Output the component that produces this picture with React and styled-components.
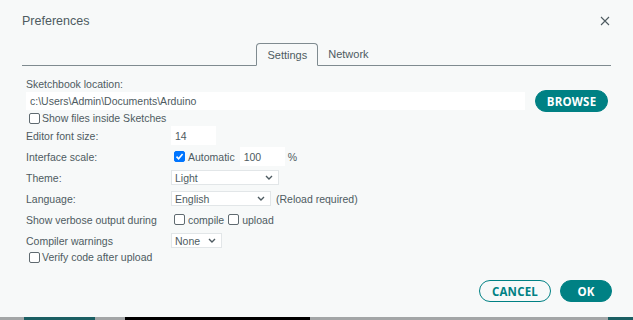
import React from "react";
import styled, { createGlobalStyle } from "styled-components";

const Global = createGlobalStyle`
  html, body { margin: 0; padding: 0; background: #f7f9f9; }
  body { font-family: "Liberation Sans", Arial, sans-serif; }
  * { box-sizing: border-box; }
`;

const Page = styled.div`
  width: 633px;
  height: 320px;
  display: flex;
  flex-direction: column;
  overflow: hidden;
`;

const Dialog = styled.div`
  height: 317px;
  background: #f7f9f9;
  padding: 0 22px;
  display: flex;
  flex-direction: column;
  color: #4e5b61;
  font-size: 10.5px;
`;

const Header = styled.div`
  height: 41px;
  display: flex;
  align-items: center;
  justify-content: space-between;
  padding-top: 1px;
`;

const Title = styled.div`
  font-size: 12.5px;
  color: #4e5b61;
`;

const Close = styled.div`
  width: 12px;
  height: 12px;
  display: flex;
`;

const Tabs = styled.div`
  display: flex;
  justify-content: center;
  align-items: flex-end;
  height: 24px;
  border-bottom: 1px solid #7f8b90;
  margin-top: 1px;
  padding-left: 2px;
`;

const Tab = styled.div`
  height: 22px;
  padding: 0 ${(p) => (p.$active ? 10 : 9)}px;
  display: flex;
  align-items: center;
  font-size: 11px;
  color: #4e5b61;
  ${(p) =>
    p.$active
      ? `border: 1px solid #7f8b90; border-bottom: 1px solid #f7f9f9; border-radius: 4px 4px 0 0; margin-bottom: -1px; height: 23px;`
      : `border: 1px solid transparent;`}
`;

const Body = styled.div`
  padding: 12px 0 0 4px;
  display: flex;
  flex-direction: column;
`;

const Label = styled.div`
  font-size: 10.5px;
  color: #4e5b61;
  white-space: nowrap;
`;

const LocationRow = styled.div`
  display: flex;
  align-items: center;
  height: 22px;
`;

const PathInput = styled.div`
  width: 499px;
  height: 18px;
  background: #fff;
  padding-left: 4px;
  display: flex;
  align-items: center;
  font-size: 10.5px;
  color: #4e5b61;
  margin-top: -1px;
`;

const Button = styled.div`
  height: 22px;
  border-radius: 11px;
  display: flex;
  align-items: center;
  justify-content: center;
  font-family: "Open Sans", sans-serif;
  font-weight: 700;
  font-size: 11.5px;
  letter-spacing: 0.2px;
  width: ${(p) => p.$w}px;
  background: ${(p) => (p.$outline ? "transparent" : "#008184")};
  color: ${(p) => (p.$outline ? "#008184" : "#ffffff")};
  border: 1px solid #008184;
`;

const BrowseWrap = styled.div`
  margin-left: 10px;
`;

const CheckRow = styled.label`
  display: flex;
  align-items: center;
  height: 12px;
  padding-left: 3px;
  gap: 2px;
`;

const Box = styled.span`
  width: 11px;
  height: 11px;
  border-radius: 2px;
  border: 1px solid #5f6a70;
  background: #fff;
  display: inline-flex;
  align-items: center;
  justify-content: center;
  flex: none;
  ${(p) => p.$checked && `background: #0075ff; border-color: #0075ff;`}
`;

const Grid = styled.div`
  display: grid;
  grid-template-columns: 145px auto;
  grid-auto-rows: 21px;
  align-items: center;
  margin-top: 1px;
`;

const Controls = styled.div`
  display: flex;
  align-items: center;
  gap: ${(p) => p.$gap || 0}px;
`;

const SmallInput = styled.div`
  width: ${(p) => p.$w}px;
  height: 19px;
  background: #fff;
  display: flex;
  align-items: center;
  padding-left: 4px;
  font-size: 10.5px;
  color: #4e5b61;
  margin-left: ${(p) => p.$ml || 0}px;
`;

const Select = styled.div`
  width: ${(p) => p.$w}px;
  height: 15px;
  background: #fff;
  border: 1px solid #e2e6e8;
  display: flex;
  align-items: center;
  justify-content: space-between;
  padding: 0 5px 0 3px;
  font-size: 10.5px;
  color: #4e5b61;
`;

const Inline = styled.span`
  display: inline-flex;
  align-items: center;
  gap: 3px;
  margin-left: ${(p) => p.$ml || 0}px;
`;

const Suffix = styled(Label)`
  margin-left: 3px;
`;

const Footer = styled.div`
  margin-top: auto;
  height: 37px;
  padding-bottom: 15px;
  display: flex;
  justify-content: flex-end;
  align-items: flex-start;
  gap: 9px;
  margin-right: -1px;
`;

const Strip = styled.div`
  height: 3px;
  display: flex;
`;

const Seg = styled.div`
  width: ${(p) => p.$w}px;
  background: ${(p) => p.$c};
`;

const Chevron = () => (
  <svg width="8" height="5" viewBox="0 0 8 5">
    <polyline points="1,1 4,4 7,1" fill="none" stroke="#4e5b61" strokeWidth="1.4" />
  </svg>
);

const Check = ({ checked }) => (
  <Box $checked={checked}>
    {checked && (
      <svg width="9" height="9" viewBox="0 0 9 9">
        <polyline points="1.5,4.6 3.6,6.8 7.6,2" fill="none" stroke="#fff" strokeWidth="1.6" />
      </svg>
    )}
  </Box>
);

export default function App() {
  return (
    <>
      <Global />
      <Page>
        <Dialog>
          <Header>
            <Title>Preferences</Title>
            <Close>
              <svg width="12" height="12" viewBox="0 0 12 12">
                <path d="M2 2 L10 10 M10 2 L2 10" stroke="#4e5b61" strokeWidth="1.1" />
              </svg>
            </Close>
          </Header>
          <Tabs>
            <Tab $active>Settings</Tab>
            <Tab>Network</Tab>
          </Tabs>
          <Body>
            <Label>Sketchbook location:</Label>
            <LocationRow>
              <PathInput>c:\Users\Admin\Documents\Arduino</PathInput>
              <BrowseWrap>
                <Button $w={73}>BROWSE</Button>
              </BrowseWrap>
            </LocationRow>
            <CheckRow>
              <Check />
              <Label>Show files inside Sketches</Label>
            </CheckRow>
            <Grid>
              <Label>Editor font size:</Label>
              <Controls>
                <SmallInput $w={45}>14</SmallInput>
              </Controls>
              <Label>Interface scale:</Label>
              <Controls>
                <Inline $ml={3}>
                  <Check checked />
                  <Label>Automatic</Label>
                </Inline>
                <SmallInput $w={45} $ml={5}>100</SmallInput>
                <Suffix>%</Suffix>
              </Controls>
              <Label>Theme:</Label>
              <Controls>
                <Select $w={108}>
                  <span>Light</span>
                  <Chevron />
                </Select>
              </Controls>
              <Label>Language:</Label>
              <Controls $gap={5}>
                <Select $w={100}>
                  <span>English</span>
                  <Chevron />
                </Select>
                <Label>(Reload required)</Label>
              </Controls>
              <Label>Show verbose output during</Label>
              <Controls>
                <Inline $ml={3}>
                  <Check />
                  <Label>compile</Label>
                </Inline>
                <Inline $ml={4}>
                  <Check />
                  <Label>upload</Label>
                </Inline>
              </Controls>
              <Label>Compiler warnings</Label>
              <Controls>
                <Select $w={51}>
                  <span>None</span>
                  <Chevron />
                </Select>
              </Controls>
            </Grid>
            <CheckRow>
              <Check />
              <Label>Verify code after upload</Label>
            </CheckRow>
          </Body>
          <Footer>
            <Button $outline $w={72}>CANCEL</Button>
            <Button $w={52}>OK</Button>
          </Footer>
        </Dialog>
        <Strip>
          <Seg $w={24} $c="#a3a6a7" />
          <Seg $w={71} $c="#1b5f63" />
          <Seg $w={30} $c="#a3a6a7" />
          <Seg $w={185} $c="#000000" />
          <Seg $w={298} $c="#a3a6a7" />
          <Seg $w={25} $c="#1b5f63" />
        </Strip>
      </Page>
    </>
  );
}
